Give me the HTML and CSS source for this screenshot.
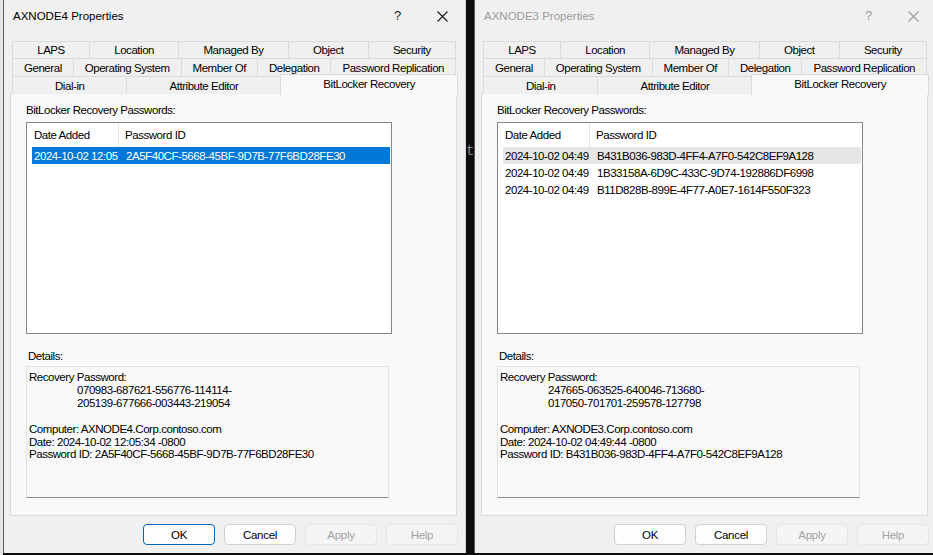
FILE: index.html
```html
<!DOCTYPE html>
<html lang="en">
<head>
<meta charset="utf-8">
<title>Properties</title>
<link rel="stylesheet" href="styles.css">
</head>
<body>
<div class="edge"></div>

<section class="win active">
  <header class="titlebar">
    <span class="title">AXNODE4 Properties</span>
    <span class="tb-btn tb-help">?</span>
    <span class="tb-btn tb-close"><svg width="11" height="11" viewBox="0 0 11 11"><path d="M0.5 0.5L10.5 10.5M10.5 0.5L0.5 10.5" stroke="currentColor" stroke-width="1.1" fill="none"/></svg></span>
  </header>
  <div class="tabs">
    <div class="tab-row r1"><span class="tab">LAPS</span><span class="tab">Location</span><span class="tab">Managed By</span><span class="tab">Object</span><span class="tab">Security</span></div>
    <div class="tab-row r2"><span class="tab">General</span><span class="tab">Operating System</span><span class="tab">Member Of</span><span class="tab">Delegation</span><span class="tab">Password Replication</span></div>
    <div class="tab-row r3"><span class="tab">Dial-in</span><span class="tab">Attribute Editor</span><span class="tab sel">BitLocker Recovery</span></div>
  </div>
  <div class="panel">
    <div class="label">BitLocker Recovery Passwords:</div>
    <div class="list">
      <div class="list-head"><span class="h-date">Date Added</span><span class="h-id">Password ID</span></div>
      <div class="row selected"><span class="c-date">2024-10-02 12:05</span><span class="c-id">2A5F40CF-5668-45BF-9D7B-77F6BD28FE30</span></div>
    </div>
    <div class="label details-label">Details:</div>
    <div class="details">
      <div>Recovery Password:</div>
      <div class="indent">070983-687621-556776-114114-</div>
      <div class="indent">205139-677666-003443-219054</div>
      <div class="blank"></div>
      <div>Computer: AXNODE4.Corp.contoso.com</div>
      <div>Date: 2024-10-02 12:05:34 -0800</div>
      <div>Password ID: 2A5F40CF-5668-45BF-9D7B-77F6BD28FE30</div>
    </div>
  </div>
  <div class="buttons">
    <button class="btn default">OK</button>
    <button class="btn">Cancel</button>
    <button class="btn disabled">Apply</button>
    <button class="btn disabled">Help</button>
  </div>
</section>

<div class="gap"><span class="peek">t</span></div>

<section class="win inactive">
  <header class="titlebar">
    <span class="title">AXNODE3 Properties</span>
    <span class="tb-btn tb-help">?</span>
    <span class="tb-btn tb-close"><svg width="11" height="11" viewBox="0 0 11 11"><path d="M0.5 0.5L10.5 10.5M10.5 0.5L0.5 10.5" stroke="currentColor" stroke-width="1.1" fill="none"/></svg></span>
  </header>
  <div class="tabs">
    <div class="tab-row r1"><span class="tab">LAPS</span><span class="tab">Location</span><span class="tab">Managed By</span><span class="tab">Object</span><span class="tab">Security</span></div>
    <div class="tab-row r2"><span class="tab">General</span><span class="tab">Operating System</span><span class="tab">Member Of</span><span class="tab">Delegation</span><span class="tab">Password Replication</span></div>
    <div class="tab-row r3"><span class="tab">Dial-in</span><span class="tab">Attribute Editor</span><span class="tab sel">BitLocker Recovery</span></div>
  </div>
  <div class="panel">
    <div class="label">BitLocker Recovery Passwords:</div>
    <div class="list">
      <div class="list-head"><span class="h-date">Date Added</span><span class="h-id">Password ID</span></div>
      <div class="row selected-inactive"><span class="c-date">2024-10-02 04:49</span><span class="c-id">B431B036-983D-4FF4-A7F0-542C8EF9A128</span></div>
      <div class="row"><span class="c-date">2024-10-02 04:49</span><span class="c-id">1B33158A-6D9C-433C-9D74-192886DF6998</span></div>
      <div class="row"><span class="c-date">2024-10-02 04:49</span><span class="c-id">B11D828B-899E-4F77-A0E7-1614F550F323</span></div>
    </div>
    <div class="label details-label">Details:</div>
    <div class="details">
      <div>Recovery Password:</div>
      <div class="indent">247665-063525-640046-713680-</div>
      <div class="indent">017050-701701-259578-127798</div>
      <div class="blank"></div>
      <div>Computer: AXNODE3.Corp.contoso.com</div>
      <div>Date: 2024-10-02 04:49:44 -0800</div>
      <div>Password ID: B431B036-983D-4FF4-A7F0-542C8EF9A128</div>
    </div>
  </div>
  <div class="buttons">
    <button class="btn">OK</button>
    <button class="btn">Cancel</button>
    <button class="btn disabled">Apply</button>
    <button class="btn disabled">Help</button>
  </div>
</section>
</body>
</html>
```
FILE: styles.css
```css
* { box-sizing: border-box; }

html, body {
  margin: 0;
  padding: 0;
}

body {
  width: 933px;
  height: 555px;
  overflow: hidden;
  display: flex;
  align-items: flex-start;
  background: #0c0c0c;
  font-family: "Liberation Sans", Arial, sans-serif;
  font-size: 11.5px;
  letter-spacing: -0.45px;
  color: #000;
}

.edge {
  flex: none;
  width: 3px;
  height: 555px;
  background: #e4e4e4;
}

.win {
  flex: none;
  width: 463px;
  height: 553px;
  display: flex;
  flex-direction: column;
  background: #f0f0f0;
  border-left: 1px solid #5c5c5c;
  border-right: 1px solid #d4d4d4;
}

.gap {
  flex: none;
  width: 8px;
  height: 555px;
  overflow: hidden;
  padding-top: 143px;
}

.peek {
  display: block;
  font-family: "Liberation Mono", monospace;
  font-size: 14px;
  letter-spacing: 0;
  color: #8a8a8a;
}

/* Title bar */
.titlebar {
  flex: none;
  height: 32px;
  display: flex;
  align-items: center;
  padding-left: 9px;
}

.title {
  flex: 1;
  font-size: 11.5px;
  letter-spacing: 0;
}

.tb-btn {
  width: 46px;
  height: 32px;
  display: flex;
  align-items: center;
  justify-content: center;
  color: #1a1a1a;
}

.tb-help {
  font-size: 13px;
  letter-spacing: 0;
  padding-bottom: 2px;
  padding-left: 3px;
}

.inactive .title,
.inactive .tb-btn {
  color: #9b9b9b;
}

/* Tabs */
.tabs {
  flex: none;
  padding: 9px 9px 0 8px;
  position: relative;
  z-index: 2;
}

.tab-row {
  display: flex;
  height: 18px;
}

.tab-row.r1 {
  height: 17px;
}

.tab {
  flex: 1 1 auto;
  display: flex;
  align-items: center;
  justify-content: center;
  white-space: nowrap;
  border: 1px solid #dadada;
  border-bottom: none;
  margin-left: -1px;
  background: #f0f0f0;
  padding: 0 2px;
}

.tab:first-child {
  margin-left: 0;
}

.r3 .tab {
  height: 18px;
}

.tab.sel {
  height: 21px;
  margin-top: -2px;
  margin-right: -2px;
  margin-left: -1px;
  align-items: flex-start;
  padding-top: 3px;
  background: #f9f9f9;
  position: relative;
  z-index: 3;
}

/* Panel */
.panel {
  flex: none;
  height: 423px;
  margin: -1px 8px 0 6px;
  padding: 9px 0 0 15px;
  background: #f9f9f9;
  border: 1px solid #dadada;
  position: relative;
  z-index: 1;
}

.label {
  height: 14px;
  line-height: 14px;
}

.list {
  margin-top: 5px;
  width: 366px;
  height: 212px;
  border: 1px solid #828790;
  background: #ffffff;
}

.list-head {
  display: flex;
  height: 24px;
  align-items: stretch;
}

.h-date {
  width: 92px;
  padding-left: 7px;
  display: flex;
  align-items: center;
  border-right: 1px solid #e5e5e5;
}

.h-id {
  padding-left: 6px;
  display: flex;
  align-items: center;
}

.row {
  display: flex;
  height: 17px;
  align-items: center;
  margin: 0 1px 0 5px;
  white-space: nowrap;
}

.c-date {
  width: 87px;
  padding-left: 2px;
}

.c-id {
  padding-left: 7px;
}

.row.selected {
  background: #0078d7;
  color: #fff;
}

.row.selected-inactive {
  background: #e6e6e6;
}

.details-label {
  margin-top: 15px;
  padding-left: 2px;
}

.details {
  margin-top: 3px;
  width: 363px;
  height: 132px;
  padding: 4px 2px 0 2px;
  line-height: 12.9px;
  background: #f9f9f9;
  border: 1px solid #e2e2e2;
  border-bottom: 1px solid #8c8c8c;
  white-space: nowrap;
}

.details .indent {
  padding-left: 48px;
}

.details .blank {
  height: 12.9px;
}

/* Buttons */
.buttons {
  flex: none;
  display: flex;
  justify-content: flex-end;
  gap: 9px;
  margin-top: 8px;
  padding-right: 7px;
}

.btn {
  width: 72px;
  height: 21px;
  padding: 0;
  font-family: "Liberation Sans", Arial, sans-serif;
  font-size: 11.5px;
  letter-spacing: -0.3px;
  color: #000;
  background: #fdfdfd;
  border: 1px solid #d0d0d0;
  border-radius: 4px;
}

.btn.default {
  border-color: #0067c0;
}

.btn.disabled {
  background: #f5f5f5;
  border-color: #e6e6e6;
  color: #a2a2a2;
}
```
